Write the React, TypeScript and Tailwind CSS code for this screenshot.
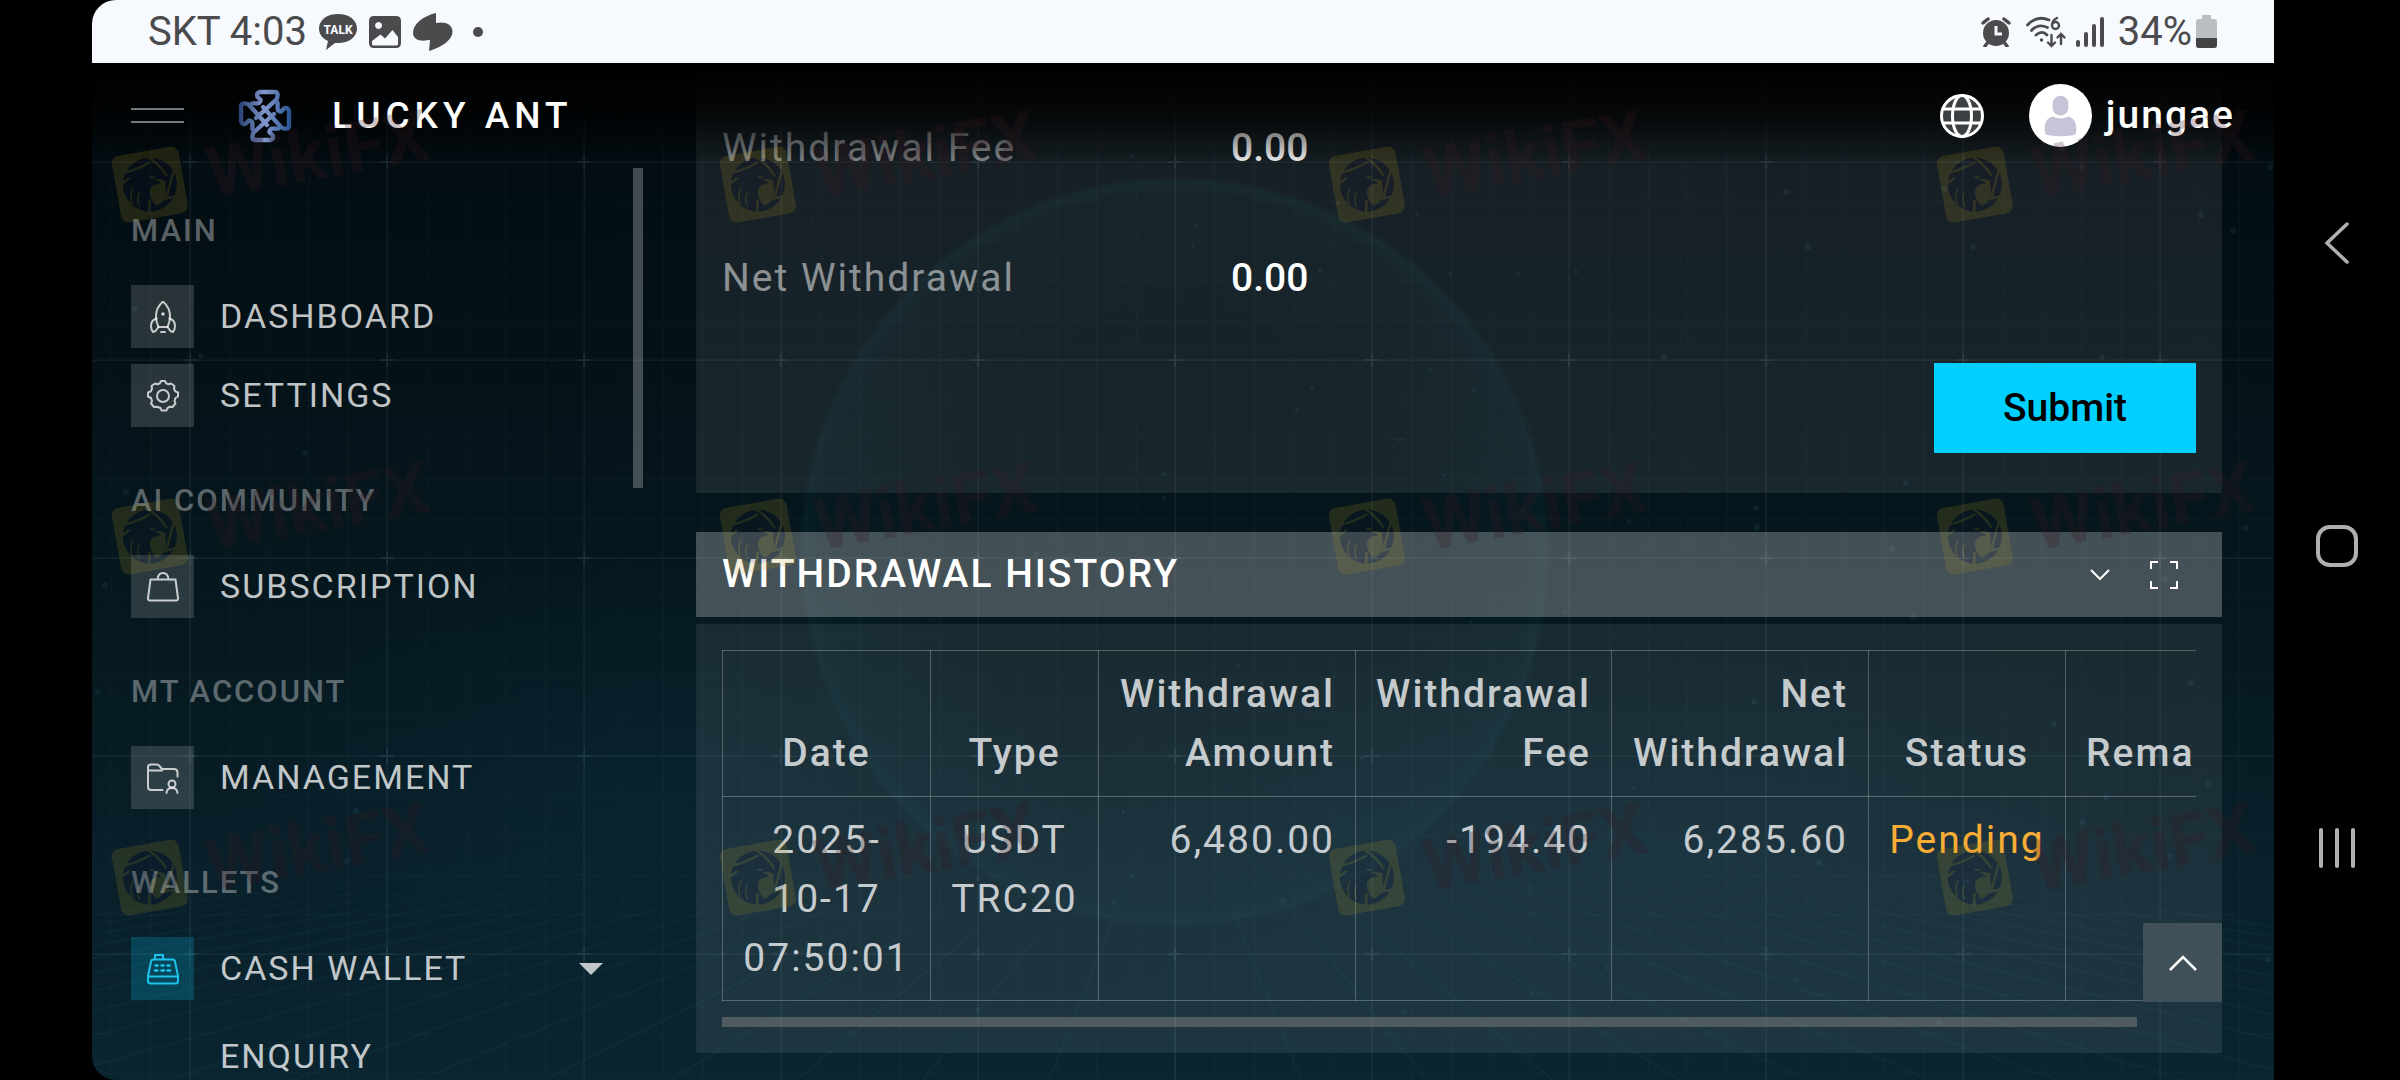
import type { ReactNode } from "react";

type NavItem = {
  label: string;
  icon: ReactNode;
  active?: boolean;
  children?: string[];
};

const iconProps = {
  viewBox: "0 0 32 32",
  fill: "none",
  stroke: "currentColor",
  strokeWidth: 2,
  strokeLinecap: "round" as const,
  strokeLinejoin: "round" as const,
  className: "size-8",
};

const RocketIcon = () => (
  <svg {...iconProps}>
    <path d="M16 0.5C12 4 9 9 9 15c0 4 1 8 2.500 11h9c1.500-3 2.500-7 2.500-11 0-6-3-11-7-14.500Z" />
    <path d="M9.500 17.500C6 18.500 4 21 4 25c0 2.500.8 4.500 2 6l2.500-1 3-4M22.500 17.500c3.500 1 5.500 3.500 5.500 7.500 0 2.500-.8 4.500-2 6l-2.500-1-3-4M14 31h4" />
    <circle cx="16" cy="13" r="0.8" fill="currentColor" />
  </svg>
);

const GearIcon = () => (
  <svg {...iconProps}>
    <circle cx="16" cy="16" r="6" />
    <path d="M13 3.200 14 1h4l1 2.200 2.500 1L24 3.500 27.500 6 27 8.500l1.200 2.800L31 12.500v4L28.500 18l-1 3 1 2.500-3 3.500-2.500-.3-2.500 1.300-1 2.500h-5l-1-2.500L10 26.700 7 27l-3-3.500 1-2.500-1-3-3-1.500v-4l2.800-1.200L5 8.500 4.500 6 8 3.500l2.500.7Z" />
  </svg>
);

const BagIcon = () => (
  <svg {...iconProps}>
    <path d="M3.500 8.500h25L31 27q.3 2.500-2 2.500H3Q.7 29.500 1 27ZM10.500 8C11 4 13 2 16 2s5 2 5.500 6" />
  </svg>
);

const FolderUserIcon = () => (
  <svg {...iconProps}>
    <path d="M15.500 28H4q-3 0-3-3V5q0-2.500 3-2.500h6q1.500 0 2.500 1.500L15 7h12q3.500 0 3.500 4v3.500M1 8.500h14" />
    <circle cx="25" cy="22" r="3.500" />
    <path d="M19.500 31c.3-3.500 2.500-5 5.500-5s5.200 1.500 5.500 5" />
  </svg>
);

const RegisterIcon = () => (
  <svg {...iconProps}>
    <path d="M4 8.500q.5-2 2.500-2h19q2 0 2.500 2L31 23v5q0 2.500-2.500 2.500h-25Q1 30.500 1 28v-5ZM1 23.500h30M8 6V2h8v4" />
    <path d="M8.500 12.500h2M14.500 12.500h2M20.500 12.500h2M8 17.500h2.500M14.500 17.500h2.500M20.500 17.500h2.500" strokeWidth="2.5" />
  </svg>
);

const sections: { title: string; items: NavItem[] }[] = [
  {
    title: "MAIN",
    items: [
      { label: "DASHBOARD", icon: <RocketIcon /> },
      { label: "SETTINGS", icon: <GearIcon /> },
    ],
  },
  { title: "AI COMMUNITY", items: [{ label: "SUBSCRIPTION", icon: <BagIcon /> }] },
  { title: "MT ACCOUNT", items: [{ label: "MANAGEMENT", icon: <FolderUserIcon /> }] },
  {
    title: "WALLETS",
    items: [{ label: "CASH WALLET", icon: <RegisterIcon />, active: true, children: ["ENQUIRY"] }],
  },
];

const columns = [
  { label: "Date", className: "w-[208px] text-center" },
  { label: "Type", className: "w-[168px] text-center" },
  { label: "Withdrawal Amount", className: "w-[257px] text-right" },
  { label: "Withdrawal Fee", className: "w-[256px] text-right" },
  { label: "Net Withdrawal", className: "w-[257px] text-right" },
  { label: "Status", className: "w-[197px] text-center" },
  { label: "Remark", className: "w-[189px] text-left" },
];

const watermarks = [144, 496, 837].flatMap((top) =>
  [20, 628, 1237, 1845].map((left) => ({ left, top })),
);

// small deterministic scatter for the star field
const stars = Array.from({ length: 130 }, (_, i) => ({
  x: (i * 733 + ((i * i * 57) % 311)) % 2182,
  y: 130 + ((i * 419 + ((i * i * 31) % 173)) % 900),
  r: 1 + (i % 3),
}));

const Backdrop = () => (
  <svg className="absolute inset-0 -z-10 size-full" aria-hidden="true">
    <defs>
      <linearGradient id="sky" x1="0" y1="0" x2="0" y2="1">
        <stop offset="0" stopColor="#020a0f" />
        <stop offset="0.3" stopColor="#041117" />
        <stop offset="0.6" stopColor="#061920" />
        <stop offset="0.8" stopColor="#091f29" />
        <stop offset="1" stopColor="#0a2530" />
      </linearGradient>
      <radialGradient id="planet">
        <stop offset="0.6" stopColor="#0c3f4c" stopOpacity="0" />
        <stop offset="0.95" stopColor="#0d3b4b" stopOpacity="0.1" />
        <stop offset="0.985" stopColor="#11505a" stopOpacity="0.15" />
        <stop offset="1" stopColor="#11505a" stopOpacity="0" />
      </radialGradient>
      <radialGradient id="glow">
        <stop offset="0" stopColor="#0b3448" stopOpacity="0.25" />
        <stop offset="1" stopColor="#0b3448" stopOpacity="0" />
      </radialGradient>
      <linearGradient id="fade" x1="0" y1="0" x2="0" y2="1">
        <stop offset="0" stopColor="#fff" stopOpacity="0" />
        <stop offset="0.4" stopColor="#fff" />
      </linearGradient>
      <mask id="floor">
        <rect x="0" y="800" width="2400" height="400" fill="url(#fade)" />
      </mask>
      <pattern id="minor" x="98" y="162" width="39.4" height="39.6" patternUnits="userSpaceOnUse">
        <path d="M0 0V40M0 0H40" stroke="#9cc8d8" strokeOpacity="0.03" strokeWidth="2" />
      </pattern>
      <pattern id="major" x="0" y="63" width="197" height="198" patternUnits="userSpaceOnUse">
        <path d="M98 0V198M0 99H197" stroke="#a5c8d4" strokeOpacity="0.04" strokeWidth="2" />
        <path d="M98 92V106M91 99H105" stroke="#a5c8d4" strokeOpacity="0.08" strokeWidth="2" />
      </pattern>
    </defs>
    <rect width="100%" height="100%" fill="url(#sky)" />
    <ellipse cx="560" cy="800" rx="420" ry="260" fill="url(#glow)" />
    <ellipse cx="1500" cy="850" rx="760" ry="240" fill="url(#glow)" />
    <circle cx="1083" cy="552" r="376" fill="url(#planet)" />
    <g mask="url(#floor)" stroke="#1d6d80" strokeOpacity="0.1" strokeWidth="2">
      {Array.from({ length: 36 }, (_, i) => (
        <line key={i} x1={1083 + (i - 18) * 14} y1="800" x2={1083 + (i - 18) * 130} y2="1090" />
      ))}
    </g>
    <rect width="100%" height="100%" fill="url(#minor)" />
    <rect width="100%" height="100%" fill="url(#major)" />
    {stars.map((s) => (
      <circle key={`${s.x}-${s.y}`} cx={s.x} cy={s.y} r={s.r} fill="#3f7386" fillOpacity="0.14" />
    ))}
  </svg>
);

const Watermarks = () => (
  <div className="pointer-events-none absolute inset-0 z-30" aria-hidden="true">
    {watermarks.map(({ left, top }) => (
      <div
        key={`${left}-${top}`}
        className="absolute flex -rotate-10 items-center gap-6"
        style={{ left: left + 2, top: top - 23 }}
      >
        <svg viewBox="0 0 68 68" className="size-[68px]">
          <g opacity="0.17">
            <rect width="68" height="68" rx="8" fill="#b89a22" />
            <circle cx="34" cy="34" r="27" fill="#1c1830" />
            <g fill="none" stroke="#b89a22" strokeWidth="2.5">
              <path d="M10 18q14-1 28-6M36 6q10 8 16 22M60 24 48 50M60 50l-22 1M28 63l3-14M7 28l8-4" />
              <path d="M17 34q-5 6-4 16M22 40q-4 6-2 14" strokeWidth="1.500" />
            </g>
            <path d="M50 33q-6-5-12-3 6 1 7 5-9-2-12 5-2 9 4 16 12-3 12-16 0-4 1-7Z" fill="#b89a22" />
            <path d="m34 25 7 2q-4 3-7-2Z" fill="#b89a22" />
          </g>
        </svg>
        <span className="text-[72px] leading-[84px] font-bold text-[#38181f]/25">WikiFX</span>
      </div>
    ))}
  </div>
);

const StatusBar = () => (
  <div className="z-20 flex h-[63px] shrink-0 items-center justify-between bg-[#f6f9fe] pr-[57px] pl-14 text-[40px] leading-none text-[#4b4b4d]">
    <div className="flex items-center gap-3">
      <span>SKT 4:03</span>
      <svg viewBox="0 0 38 36" className="h-9 w-[38px]">
        <path d="M19 0C8 0 0 6 0 14.500 0 20 3.500 24.500 9 27L7 36l9-7h3c11 0 19-6 19-14.500S30 0 19 0Z" fill="currentColor" />
        <text x="19" y="19.500" textAnchor="middle" fontSize="12" fontWeight="800" fill="#f6f9fe">TALK</text>
      </svg>
      <svg viewBox="0 0 32 32" className="size-8">
        <path fillRule="evenodd" d="M5 0h22q5 0 5 5v22q0 5-5 5H5q-5 0-5-5V5q0-5 5-5Zm4.500 6a3.500 3.500 0 1 0 .1 0ZM3 25v3q0 1.500 1.500 1.500h23q1.500 0 1.500-1.500v-7l-5.500-7-7.500 8.500-4.500-4Z" fill="currentColor" />
      </svg>
      <svg viewBox="0 0 40 38" className="h-[38px] w-10">
        <path d="M23 0C10 3 0 11 0 20c0 4 3 7 8 7.500 4 .5 7-.5 9-.5l-1 11c14-4 24-12 23.500-20C39 11 32 8 23 10Z" fill="currentColor" />
      </svg>
      <svg viewBox="0 0 10 10" className="ml-2 size-[10px]">
        <circle cx="5" cy="5" r="5" fill="currentColor" />
      </svg>
    </div>
    <div className="flex items-center">
      <svg viewBox="0 0 30 30" className="mr-[15px] size-[30px]">
        <path d="M4 29l4-5M26 29l-4-5M2 6l5-4M28 6l-5-4" stroke="currentColor" strokeWidth="3.500" strokeLinecap="round" />
        <circle cx="15" cy="16" r="13" fill="currentColor" />
        <path d="M15 9v8h6" fill="none" stroke="#f6f9fe" strokeWidth="3" />
      </svg>
      <svg viewBox="0 0 40 32" className="mr-[10px] h-8 w-10" fill="none" stroke="currentColor" strokeWidth="2.8" strokeLinecap="round">
        <path d="M1.500 9C8 2 16 1 23 4M5.500 14.500C10 9.500 16 9 21.500 11.500M10 19c4-3.500 8-3.500 11 0" />
        <path d="M25.500 19v11m-3.500-3.500 3.500 3.500 3.500-3.500M35 28V18m-3.500 3.500L35 18l3.500 3.500" strokeWidth="2.4" />
        <circle cx="15.500" cy="24" r="1" fill="currentColor" strokeWidth="1.500" />
        <path d="M31 2c-4 2-5 5-5 7.500a3.500 3.500 0 1 0 3.500-3.500q-2 0-3.200 2" strokeWidth="2.4" />
      </svg>
      <svg viewBox="0 0 28 30" className="mr-[14px] h-[30px] w-7" stroke="currentColor" strokeWidth="4" strokeLinecap="round">
        <path d="M2 25v3M10 17v11M18 9v19M26 2v26" />
      </svg>
      <span>34%</span>
      <svg viewBox="0 0 21 33" className="ml-1 h-[33px] w-[21px]">
        <path d="M6 0h9v4h3q3 0 3 3v23q0 3-3 3H3q-3 0-3-3V7q0-3 3-3h3Z" fill="#b9bec3" />
        <path d="M0 23h21v7q0 3-3 3H3q-3 0-3-3Z" fill="#434345" />
      </svg>
    </div>
  </div>
);

const AntLogo = () => (
  <svg viewBox="0 0 216 216" className="ml-[46px] size-[72px]" aria-hidden="true">
    <defs>
      <linearGradient id="ant" gradientUnits="userSpaceOnUse" x1="30" y1="108" x2="180" y2="108">
        <stop offset="0" stopColor="#2c4478" />
        <stop offset="0.5" stopColor="#8398cd" />
        <stop offset="1" stopColor="#2a5592" />
      </linearGradient>
    </defs>
    <g fill="none" stroke="url(#ant)" strokeWidth="13" strokeLinejoin="round" strokeLinecap="round">
      <path d="M78 114 140 58Q148 36 134 36H90Q78 38 82 50L92 60Q90 72 78 70H66" />
      <path d="M99 81 155 143Q177 151 177 137V93Q175 81 163 85L153 95Q141 93 143 81V69" />
      <path d="M132 102 70 158Q62 180 76 180H120Q132 178 128 166L118 156Q120 144 132 146H144" />
      <path d="M111 135 55 73Q33 65 33 79V123Q35 135 47 131L57 121Q69 123 67 135V147" />
    </g>
  </svg>
);

const Header = () => (
  <header className="absolute inset-x-0 top-[63px] z-10 flex h-[105px] items-center justify-between bg-linear-to-b from-black via-black/75 to-transparent pr-[39px] pl-[39px]">
    <div className="flex items-center">
      <button type="button" aria-label="Toggle menu" className="flex w-[53px] flex-col gap-[11px]">
        <span className="h-[2px] w-full bg-[#74787a]" />
        <span className="h-[2px] w-full bg-[#74787a]" />
      </button>
      <AntLogo />
      <span className="ml-[30px] text-[37px] leading-none font-medium tracking-[5px]">LUCKY ANT</span>
    </div>
    <div className="flex items-center">
      <button type="button" aria-label="Language">
        <svg viewBox="0 0 44 44" className="size-11" fill="#3c4042" stroke="#fff" strokeWidth="3">
          <circle cx="22" cy="22" r="20.500" />
          <ellipse cx="22" cy="22" rx="9.500" ry="20.500" />
          <path d="M4 15h36M4 29h36" />
        </svg>
      </button>
      <svg viewBox="0 0 64 64" className="ml-[45px] size-[63px]" aria-hidden="true">
        <circle cx="32" cy="32" r="32" fill="#fff" />
        <rect x="24" y="12" width="16" height="20" rx="8" fill="#c8c4d8" />
        <path d="M24 33q8 4 16 0 8 2 8 11v4q0 4-4 4-12 2-24 0-4 0-4-4v-4q0-9 8-11Z" fill="#c8c4d8" />
      </svg>
      <span className="ml-[14px] text-[39px] leading-[59px] font-medium tracking-[2px]">jungae</span>
    </div>
  </header>
);

const Sidebar = () => (
  <aside className="flex w-[604px] shrink-0 overflow-hidden pl-[39px]">
    <nav className="flex flex-1 flex-col gap-[50px] pt-36">
      {sections.map((section) => (
        <section key={section.title}>
          <h3 className="text-[31px] leading-[47px] font-medium tracking-[2px] text-white/35">{section.title}</h3>
          <ul className="mt-[31px] flex flex-col gap-4">
            {section.items.map((item) => (
              <li key={item.label}>
                <a href="#" className="flex items-center pr-[30px] text-[34px] leading-[51px] tracking-[2px] text-white/75">
                  <span
                    className={
                      item.active
                        ? "flex size-[63px] items-center justify-center bg-[#00cfff]/20 text-[#1cc4ee]"
                        : "flex size-[63px] items-center justify-center bg-white/15 text-white/75"
                    }
                  >
                    {item.icon}
                  </span>
                  <span className="ml-[26px] flex-1">{item.label}</span>
                  {item.children && (
                    <svg viewBox="0 0 24 12" className="h-3 w-6">
                      <path d="M0 0h24L12 12Z" fill="currentColor" />
                    </svg>
                  )}
                </a>
                {item.children?.map((child) => (
                  <a key={child} href="#" className="mt-[31px] ml-[89px] block text-[34px] leading-[51px] tracking-[2px] text-white/75">
                    {child}
                  </a>
                ))}
              </li>
            ))}
          </ul>
        </section>
      ))}
    </nav>
    <div className="mt-[105px] mr-[53px] h-80 w-[10px] bg-white/25" />
  </aside>
);

const WithdrawalForm = () => (
  <form className="bg-white/8 px-[26px] pt-14 pb-10" onSubmit={(e) => e.preventDefault()}>
    <dl className="flex flex-col gap-[71px] text-[39px] leading-[59px]">
      <div className="flex">
        <dt className="w-[509px] tracking-[2px] text-white/50">Withdrawal Fee</dt>
        <dd className="font-medium">0.00</dd>
      </div>
      <div className="flex">
        <dt className="w-[509px] tracking-[2px] text-white/50">Net Withdrawal</dt>
        <dd className="font-medium">0.00</dd>
      </div>
    </dl>
    <div className="mt-[55px] flex justify-end">
      <button type="submit" className="h-[90px] w-[262px] bg-[#00cfff] text-[39px] font-medium text-black">
        Submit
      </button>
    </div>
  </form>
);

const WithdrawalHistory = () => (
  <section className="mt-[39px]">
    <div className="flex h-[85px] items-center justify-between bg-white/25 pr-11 pl-[26px]">
      <h2 className="text-[39px] leading-[59px] font-medium tracking-[2px]">WITHDRAWAL HISTORY</h2>
      <div className="flex items-center gap-10">
        <button type="button" aria-label="Collapse">
          <svg viewBox="0 0 20 12" className="h-3 w-5" fill="none" stroke="#fff" strokeWidth="2">
            <path d="m1 1 9 9 9-9" />
          </svg>
        </button>
        <button type="button" aria-label="Full screen">
          <svg viewBox="0 0 28 28" className="size-7" fill="none" stroke="#fff" strokeWidth="2">
            <path d="M1 8V1h7M20 1h7v7M27 20v7h-7M8 27H1v-7" />
          </svg>
        </button>
      </div>
    </div>
    <div className="mt-[7px] bg-white/8 px-[26px] py-[26px]">
      <div className="overflow-hidden">
        <table className="w-[1532px] table-fixed border-collapse text-[39px] leading-[59px] tracking-[2px] text-white/75">
          <thead>
            <tr>
              {columns.map((col) => (
                <th
                  key={col.label}
                  className={`border border-white/25 px-5 pt-[14px] pb-[13px] align-bottom font-medium ${col.className}`}
                >
                  {col.label}
                </th>
              ))}
            </tr>
          </thead>
          <tbody>
            <tr className="align-top [&>td]:border [&>td]:border-white/25 [&>td]:px-5 [&>td]:pt-[14px] [&>td]:pb-3">
              <td className="text-center">2025-<br />10-17<br />07:50:01</td>
              <td className="text-center">USDT TRC20</td>
              <td className="text-right">6,480.00</td>
              <td className="text-right">-194.40</td>
              <td className="text-right">6,285.60</td>
              <td className="text-center text-[#f9ad35]">Pending</td>
              <td />
            </tr>
          </tbody>
        </table>
      </div>
      <div className="mt-4 h-[10px] w-[96%] bg-[#b3a49e]/35" />
    </div>
  </section>
);

const SystemNav = () => (
  <nav className="flex w-[126px] shrink-0 flex-col items-center justify-between pt-[222px] pb-[212px] text-[#b0b0b0]">
    <button type="button" aria-label="Back">
      <svg viewBox="0 0 24 42" className="h-[42px] w-6" fill="none" stroke="currentColor" strokeWidth="3.500" strokeLinecap="round">
        <path d="M22 2 2 21l20 19" />
      </svg>
    </button>
    <button type="button" aria-label="Home" className="size-[42px] rounded-[14px] border-4 border-[#b0b0b0]" />
    <button type="button" aria-label="Recent apps" className="flex h-10 gap-3">
      <span className="w-[4px] rounded-full bg-[#b0b0b0]" />
      <span className="w-[4px] rounded-full bg-[#b0b0b0]" />
      <span className="w-[4px] rounded-full bg-[#b0b0b0]" />
    </button>
  </nav>
);

const App = () => {
  return (
    <div className="flex h-screen bg-black pl-[92px] font-['Roboto',sans-serif] text-white">
      <div className="relative isolate flex min-w-0 flex-1 flex-col overflow-hidden rounded-l-3xl">
        <Backdrop />
        <StatusBar />
        <Header />
        <div className="flex min-h-0 flex-1">
          <Sidebar />
          <main className="min-w-0 flex-1 pr-[52px]">
            <WithdrawalForm />
            <WithdrawalHistory />
          </main>
        </div>
        <button
          type="button"
          aria-label="Scroll to top"
          className="absolute right-[52px] bottom-[78px] z-20 flex size-[79px] items-center justify-center bg-[#3f5059]"
        >
          <svg viewBox="0 0 28 16" className="h-4 w-7" fill="none" stroke="#fff" strokeWidth="2.500">
            <path d="M1 15 14 2l13 13" />
          </svg>
        </button>
        <Watermarks />
      </div>
      <SystemNav />
    </div>
  );
};

export default App;
